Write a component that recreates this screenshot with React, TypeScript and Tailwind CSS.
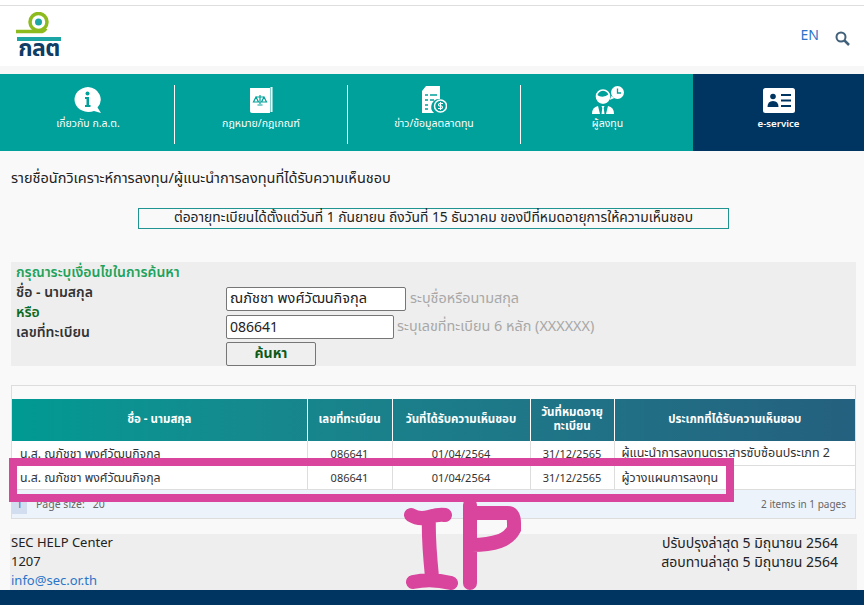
const FONT = "font-['Noto_Sans_Thai','Noto_Sans','Noto_Sans_CJK_SC','DejaVu_Sans',sans-serif]"

function InfoIcon() {
  return (
    <svg width="30" height="27" viewBox="0 0 30 27">
      <path d="M15 0a14 12.500 0 1 0 6 24l7 2-3.500-5.500A13.500 12.500 0 0 0 15 0z" fill="#fff" />
      <circle cx="14.500" cy="6.500" r="2" fill="#00a19a" />
      <path d="M12 10h4v8h1.500v2h-5.500v-2h1.500v-6H12z" fill="#00a19a" />
    </svg>
  )
}

function LawIcon() {
  return (
    <svg width="24" height="28" viewBox="0 0 24 28">
      <path d="M1 2h20v25H3a2 2 0 0 1-2-2z" fill="#fff" />
      <rect x="21.500" y="1" width="2" height="25" fill="#fff" />
      <path d="M11 9v9M7 11h8M7 11l-2.500 5h5zM15 11l-2.500 5h5zM8.500 19h5" stroke="#00a19a" strokeWidth="1.200" fill="none" />
    </svg>
  )
}

function NewsIcon() {
  return (
    <svg width="26" height="28" viewBox="0 0 26 28">
      <path d="M5 0h14v13a8 8 0 0 0-6 14H1V5z" fill="#fff" />
      <path d="M4 9h3M9 9h7M4 14h3M9 14h4M4 19h3M4 23h3" stroke="#00a19a" strokeWidth="1.500" />
      <circle cx="19.500" cy="20" r="6" fill="#00a19a" stroke="#fff" strokeWidth="1.500" />
      <path d="M22 17.500h-3.500a1.300 1.300 0 0 0 0 2.500h2a1.300 1.300 0 0 1 0 2.500H17M19.500 16v8" stroke="#fff" strokeWidth="1.100" fill="none" />
    </svg>
  )
}

function InvestorIcon() {
  return (
    <svg width="34" height="28" viewBox="0 0 34 28">
      <circle cx="12" cy="10.500" r="6.500" fill="#00a19a" stroke="#fff" strokeWidth="1.600" />
      <path d="M6 9q6 4 12-1l.5 3a6.500 6.500 0 0 1-13 0z" fill="#fff" />
      <circle cx="26.500" cy="6.500" r="6.500" fill="#fff" />
      <path d="M20.500 10l-2 4 5-2z" fill="#fff" />
      <path d="M26.500 2.500V7h3.500" stroke="#00a19a" strokeWidth="1.300" fill="none" />
      <path d="M1 28q0-7 6-8l2 8zM23 28q0-7-6-8l-2 8zM10.500 20h3l-.8 2 .8 6h-3l.8-6z" fill="#fff" />
    </svg>
  )
}

function CardIcon() {
  return (
    <svg width="32" height="25" viewBox="0 0 32 25">
      <rect width="32" height="25" rx="2.500" fill="#fff" />
      <circle cx="10" cy="8.500" r="2.800" fill="#003561" />
      <path d="M4.500 19q0-6 5.500-6t5.500 6z" fill="#003561" />
      <path d="M18 7h10M18 12.500h10M18 18h10" stroke="#003561" strokeWidth="2" />
    </svg>
  )
}

const navItems = [
  { label: 'เกี่ยวกับ ก.ล.ต.', icon: <InfoIcon /> },
  { label: 'กฎหมาย/กฎเกณฑ์', icon: <LawIcon /> },
  { label: 'ข่าว/ข้อมูลตลาดทุน', icon: <NewsIcon /> },
  { label: 'ผู้ลงทุน', icon: <InvestorIcon /> },
]

const rows = [
  { type: 'ผู้แนะนำการลงทุนตราสารซับซ้อนประเภท 2' },
  { type: 'ผู้วางแผนการลงทุน' },
]

export default function App() {
  return (
    <div className={`${FONT} relative w-[864px] h-[605px] overflow-hidden bg-[#f9f9f9] text-[#222]`}>
      {/* Header */}
      <div className="h-[5px] bg-white" />
      <header className="h-[61px] bg-white border-t border-[#dedede] flex justify-between pl-[16px] pr-[14px]">
        <div className="w-[46px] pt-[6px] flex flex-col items-center">
          <svg width="46" height="24" viewBox="0 0 46 24">
            <circle cx="22.500" cy="10" r="8.500" fill="none" stroke="#8dbb1e" strokeWidth="3.500" />
            <circle cx="22.500" cy="10" r="3.500" fill="#1ba5a5" />
            <path d="M0 19.500h26a8 8 0 0 0 4-3" fill="none" stroke="#8dbb1e" strokeWidth="3.500" />
          </svg>
          <div className="w-[44px] h-[4px] mt-[1px] bg-[#1ba5a5]" />
          <div className="text-[23px] leading-[17px] font-bold text-[#0f3d66] tracking-[-0.5px]">กลต</div>
        </div>
        <div className="flex items-start gap-[16px] pt-[22px]">
          <span className="text-[14px] leading-[16px] text-[#2a75c9]">EN</span>
          <svg className="mt-[3px]" width="15" height="15" viewBox="0 0 15 15">
            <circle cx="6" cy="6" r="4.500" fill="none" stroke="#41607a" strokeWidth="2" />
            <path d="M9.500 9.500L14 14" stroke="#41607a" strokeWidth="2.500" />
          </svg>
        </div>
      </header>
      <div className="h-[8px] bg-[#f7f7f7]" />

      {/* Main nav */}
      <nav className="h-[77px] flex bg-[#00a19a] pl-[2px]">
        {navItems.map((item, i) => (
          <div key={item.label} className="w-[173px] flex items-start">
            <div className="flex-1 flex flex-col items-center pt-[12px]">
              <div className="h-[28px] flex items-center">{item.icon}</div>
              <div className="mt-[3px] text-[10.500px] leading-[14px] text-white whitespace-nowrap">{item.label}</div>
            </div>
            {i < 3 && <div className="w-px h-[59px] mt-[11px] bg-white" />}
          </div>
        ))}
        <div className="flex-1 -ml-px bg-[#003561] flex flex-col items-center pt-[12px]">
          <div className="h-[28px] flex items-center"><CardIcon /></div>
          <div className="mt-[3px] text-[9.700px] leading-[14px] font-semibold text-white">e-service</div>
        </div>
      </nav>

      {/* Content */}
      <main className="px-[11px] pr-[8px]">
        <h1 className="mt-[18px] text-[14.500px] leading-[20px] font-normal">รายชื่อนักวิเคราะห์การลงทุน/ผู้แนะนำการลงทุนที่ได้รับความเห็นชอบ</h1>
        <div className="mt-[19px] ml-[127px] w-[591px] h-[21px] border border-[#1f9490] text-center text-[13.800px] leading-[18px]">
          ต่ออายุทะเบียนได้ตั้งแต่วันที่ 1 กันยายน ถึงวันที่ 15 ธันวาคม ของปีที่หมดอายุการให้ความเห็นชอบ
        </div>

        {/* Search form */}
        <section className="mt-[33px] h-[104px] bg-[#eeeeee] flex pl-[5px] pt-[1px]">
          <div className="w-[210px] text-[14px] leading-[20px] font-semibold text-[#333]">
            <div className="text-[#1fa35c]">กรุณาระบุเงื่อนไขในการค้นหา</div>
            <div>ชื่อ - นามสกุล</div>
            <div className="text-[#0d6b1f]">หรือ</div>
            <div>เลขที่ทะเบียน</div>
          </div>
          <div className="pt-[24px] flex flex-col">
            <div className="flex items-center gap-[4px]">
              <input readOnly value="ณภัชชา พงศ์วัฒนกิจกุล" className="w-[180px] h-[24px] px-[3px] bg-white border border-[#767676] rounded-[2px] text-[14.500px] text-[#222]" />
              <span className="text-[14.400px] text-[#a8a8a8]">ระบุชื่อหรือนามสกุล</span>
            </div>
            <div className="mt-[4px] flex items-center gap-[3px]">
              <input readOnly value="086641" className="w-[168px] h-[24px] px-[3px] bg-white border border-[#767676] rounded-[2px] text-[14px] text-[#222]" />
              <span className="text-[14.400px] text-[#a8a8a8]">ระบุเลขที่ทะเบียน 6 หลัก (XXXXXX)</span>
            </div>
            <button className="mt-[3px] w-[90px] h-[24px] shrink-0 bg-[#efefef] border border-[#767676] rounded-[2px] text-[14px] leading-[20px] font-bold text-[#0d5a1a]">ค้นหา</button>
          </div>
        </section>

        {/* Results */}
        <section className="mt-[19px] h-[134px] bg-[#fafafa] border border-[#dddddd] pt-[13px]">
          <table className="w-full table-fixed border-collapse text-[11px] text-center">
            <colgroup>
              <col className="w-[295px]" />
              <col className="w-[85px]" />
              <col className="w-[138px]" />
              <col className="w-[84px]" />
              <col />
            </colgroup>
            <thead className="text-white bg-linear-to-r from-[#009a93] to-[#24607f] text-[11.500px] leading-[14px]">
              <tr className="h-[42px]">
                <th className="border-r border-white font-bold">ชื่อ - นามสกุล</th>
                <th className="border-r border-white font-bold">เลขที่ทะเบียน</th>
                <th className="border-r border-white font-bold">วันที่ได้รับความเห็นชอบ</th>
                <th className="border-r border-white font-bold">วันที่หมดอายุทะเบียน</th>
                <th className="font-bold">ประเภทที่ได้รับความเห็นชอบ</th>
              </tr>
            </thead>
            <tbody className="text-[#333]">
              {rows.map((row) => (
                <tr key={row.type} className="h-[24px] border-b border-[#dddddd] bg-white">
                  <td className="border-r border-[#dddddd] text-left pl-[8px] pt-[4px] text-[12.300px]">น.ส. ณภัชชา พงศ์วัฒนกิจกุล</td>
                  <td className="border-r border-[#dddddd] pt-[4px]">086641</td>
                  <td className="border-r border-[#dddddd] pt-[4px]">01/04/2564</td>
                  <td className="border-r border-[#dddddd] pt-[4px]">31/12/2565</td>
                  <td className="text-left pl-[7px] pt-[4px] text-[12.500px] whitespace-nowrap">{row.type}</td>
                </tr>
              ))}
            </tbody>
          </table>
          <div className="h-[28px] bg-[#edf3fb] flex items-center justify-between text-[10.500px] text-[#666] pr-[9px] pt-[4px]">
            <div className="flex items-center">
              <span className="w-[15px] h-[17px] bg-[#d3ddf0] text-center leading-[17px]">1</span>
              <span className="ml-[9px]">Page size:</span>
              <span className="ml-[8px]">20</span>
            </div>
            <span className="text-[10px]">2 items in 1 pages</span>
          </div>
        </section>

        {/* Footer info */}
        <section className="mt-[15px] -ml-px -mr-px h-[56px] bg-[#eeeeee] flex justify-between pl-px pr-[19px] text-[13px] leading-[19px]">
          <div>
            <div>SEC HELP Center</div>
            <div>1207</div>
            <div className="text-[#2a75c9]">info@sec.or.th</div>
          </div>
          <div className="text-right text-[14px]">
            <div>ปรับปรุงล่าสุด 5 มิถุนายน 2564</div>
            <div>สอบทานล่าสุด 5 มิถุนายน 2564</div>
          </div>
        </section>
      </main>
      <div className="absolute left-0 right-0 bottom-0 h-[15px] bg-[#003561]" />

      {/* Hand-drawn annotation over the screenshot */}
      <div className="absolute left-[9px] top-[458px] w-[725px] h-[44px] border-[8px] border-[#d9459c]" />
      <svg className="absolute left-[400px] top-[495px]" width="130" height="100" viewBox="0 0 130 100">
        <path d="M11 20q8 5 18 2t16-2M29 22q-1 20 3 60M13 87q18-4 38 1" fill="none" stroke="#d9459c" strokeWidth="14" strokeLinecap="round" />
        <path d="M70 10v78M70 18h38q6 0 6 10v6q-4 8-14 12-12 4-28 4" fill="none" stroke="#d9459c" strokeWidth="14" strokeLinecap="round" />
      </svg>
    </div>
  )
}
